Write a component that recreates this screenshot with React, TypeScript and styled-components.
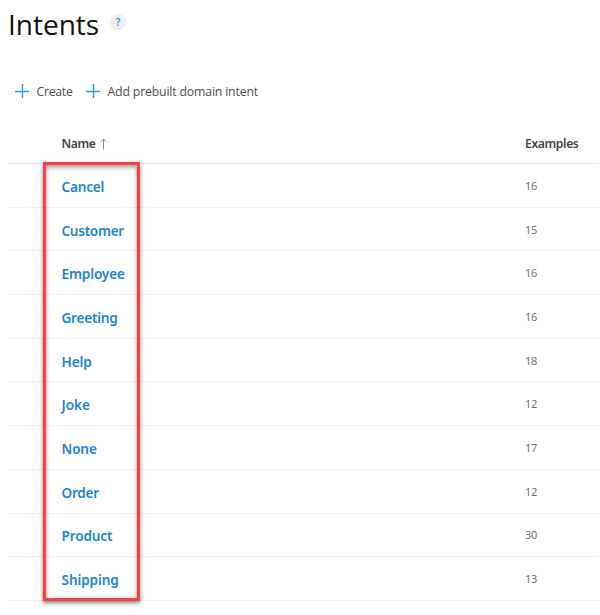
import React from "react";
import styled, { createGlobalStyle } from "styled-components";

const GlobalStyle = createGlobalStyle`
  * { box-sizing: border-box; }
  body {
    margin: 0;
    background: #fff;
    overflow: hidden;
    font-family: "Noto Sans", "Open Sans", sans-serif;
  }
`;

const Page = styled.main`
  width: 600px;
  height: 615px;
  padding: 0 1px 0 8px;
  background: #fff;
`;

const Header = styled.header`
  display: flex;
  align-items: flex-start;
  height: 78px;
`;

const Title = styled.h1`
  margin: 4px 0 0;
  width: 102px;
  font-family: "Open Sans", sans-serif;
  font-size: 28px;
  line-height: 40px;
  font-weight: 400;
  color: #111;
`;

const Help = styled.span`
  display: grid;
  place-items: center;
  width: 16px;
  height: 16px;
  margin-top: 14px;
  border-radius: 50%;
  background: #f1f0ef;
  color: #3b97dd;
  font-size: 10px;
  line-height: 16px;
  font-weight: 600;
`;

const Toolbar = styled.div`
  display: flex;
  align-items: center;
  height: 26px;
  padding-left: 7px;
`;

const Command = styled.button<{ $width: number; $spacing: number }>`
  display: flex;
  align-items: center;
  gap: 7.5px;
  width: ${(p) => p.$width}px;
  padding: 0;
  border: 0;
  background: none;
  font: 400 12.3px/20px "Open Sans", sans-serif;
  letter-spacing: ${(p) => p.$spacing}px;
  color: #505050;
  white-space: nowrap;
`;

const Label = styled.span`
  padding-top: 2px;
`;

const PlusSvg = styled.svg`
  flex: none;
  width: 14px;
  height: 14px;
`;

const Table = styled.section`
  position: relative;
  margin-top: 20px;
`;

const Row = styled.div`
  display: grid;
  grid-template-columns: 517px 1fr;
  align-items: center;
  height: 43.7px;
  border-bottom: 1px solid #f1f1f1;
`;

const HeadRow = styled(Row)`
  height: 40px;
  padding-top: 1px;
  border-bottom-color: #e9e9e9;
  font-size: 12.2px;
  line-height: 18px;
  font-weight: 600;
  color: #444;
`;

const HeadCell = styled.span<{ $indent?: number; $spacing: number }>`
  display: flex;
  align-items: center;
  gap: 5px;
  padding-left: ${(p) => p.$indent ?? 0}px;
  letter-spacing: ${(p) => p.$spacing}px;
`;

const IntentLink = styled.a<{ $spacing: number }>`
  padding: 3px 0 0 53.5px;
  font-size: 13.6px;
  line-height: 20px;
  font-weight: 600;
  letter-spacing: ${(p) => p.$spacing}px;
  color: #1b84d8;
`;

const Count = styled.span`
  padding-top: 1px;
  font-size: 11px;
  line-height: 16px;
  letter-spacing: -0.4px;
  color: #737373;
`;

const Highlight = styled.div`
  position: absolute;
  left: 35px;
  top: 38px;
  width: 97px;
  height: 439px;
  border: 3px solid #fa4040;
  box-shadow: 0 2px 4px rgba(0, 0, 0, 0.5), inset 0 2px 4px rgba(0, 0, 0, 0.42);
  pointer-events: none;
`;

const Plus = () => (
  <PlusSvg viewBox="0 0 14 14" aria-hidden="true">
    <path d="M0 7.5H14M7.5 0V14" stroke="#3399e6" strokeWidth="1.4" fill="none" />
  </PlusSvg>
);

const SortArrow = () => (
  <svg width="7" height="12" viewBox="0 0 7 12" aria-hidden="true">
    <path d="M3.5 11.5V1M.7 3.8 3.5 1l2.8 2.8" stroke="#888" strokeWidth="1" fill="none" />
  </svg>
);

const intents = [
  { name: "Cancel", examples: 16, spacing: -0.2 },
  { name: "Customer", examples: 15, spacing: -0.3 },
  { name: "Employee", examples: 16, spacing: -0.15 },
  { name: "Greeting", examples: 16, spacing: -0.25 },
  { name: "Help", examples: 18, spacing: -0.15 },
  { name: "Joke", examples: 12, spacing: -0.05 },
  { name: "None", examples: 17, spacing: -0.15 },
  { name: "Order", examples: 12, spacing: -0.25 },
  { name: "Product", examples: 30, spacing: -0.15 },
  { name: "Shipping", examples: 13, spacing: -0.1 },
];

export default function App() {
  return (
    <>
      <GlobalStyle />
      <Page>
        <Header>
          <Title>Intents</Title>
          <Help>?</Help>
        </Header>
        <Toolbar>
          <Command $width={71} $spacing={-0.3}><Plus /><Label>Create</Label></Command>
          <Command $width={180} $spacing={-0.18}><Plus /><Label>Add prebuilt domain intent</Label></Command>
        </Toolbar>
        <Table>
          <HeadRow>
            <HeadCell $indent={53.5} $spacing={-0.45}>Name<SortArrow /></HeadCell>
            <HeadCell $spacing={-0.4}>Examples</HeadCell>
          </HeadRow>
          {intents.map((intent) => (
            <Row key={intent.name}>
              <IntentLink $spacing={intent.spacing}>{intent.name}</IntentLink>
              <Count>{intent.examples}</Count>
            </Row>
          ))}
          <Highlight />
        </Table>
      </Page>
    </>
  );
}
